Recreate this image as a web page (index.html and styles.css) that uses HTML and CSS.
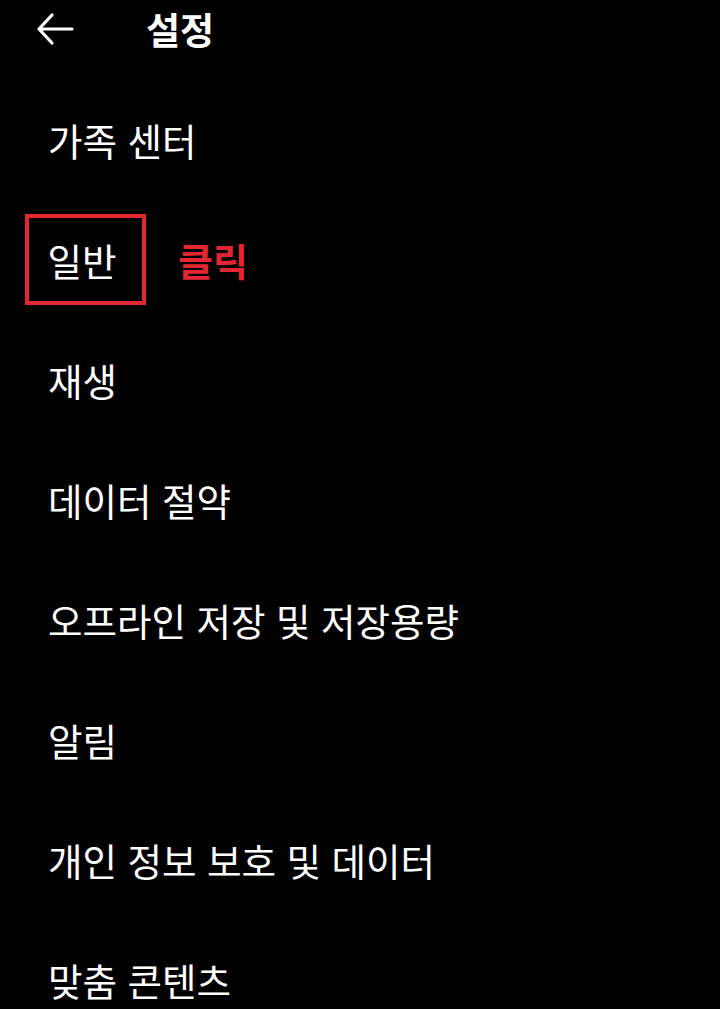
FILE: index.html
```html
<!DOCTYPE html>
<html lang="ko">
<head>
<meta charset="utf-8">
<link rel="stylesheet" href="styles.css">
</head>
<body>
<header class="topbar">
  <span class="back">
    <svg width="38" height="34" viewBox="0 0 38 34"><path d="M36 17H3M16 3L3 17l13 14" fill="none" stroke="#fff" stroke-width="3.2" stroke-linecap="round" stroke-linejoin="round"/></svg>
  </span>
  <h1 class="title">설정</h1>
</header>
<ul class="menu">
  <li class="item">가족 센터</li>
  <li class="item"><span class="boxed">일반</span><span class="note">클릭</span></li>
  <li class="item">재생</li>
  <li class="item">데이터 절약</li>
  <li class="item">오프라인 저장 및 저장용량</li>
  <li class="item">알림</li>
  <li class="item">개인 정보 보호 및 데이터</li>
  <li class="item">맞춤 콘텐츠</li>
</ul>
</body>
</html>
```
FILE: styles.css
```css
html, body {
  margin: 0;
  padding: 0;
  background: #000;
  color: #fff;
  font-family: "Noto Sans CJK KR", "Noto Sans", sans-serif;
}
body {
  width: 720px;
  height: 1009px;
  overflow: hidden;
}
.topbar {
  height: 58px;
  display: flex;
  align-items: center;
  padding-left: 36px;
}
.back {
  display: flex;
  width: 38px;
  height: 34px;
}
.title {
  margin: 0 0 0 72px;
  font-size: 37px;
  font-weight: 700;
  line-height: 1;
}
.menu {
  list-style: none;
  margin: 0;
  padding: 21px 0 0 48px;
}
.item {
  height: 120px;
  display: flex;
  align-items: center;
  font-size: 37.5px;
  font-weight: 400;
}
.boxed {
  box-sizing: border-box;
  width: 121px;
  height: 91px;
  margin-left: -23px;
  padding-left: 18.5px;
  border: 4.5px solid #e32632;
  display: flex;
  align-items: center;
}
.note {
  margin-left: 32px;
  color: #e32632;
  font-weight: 700;
  font-size: 38px;
}
```
